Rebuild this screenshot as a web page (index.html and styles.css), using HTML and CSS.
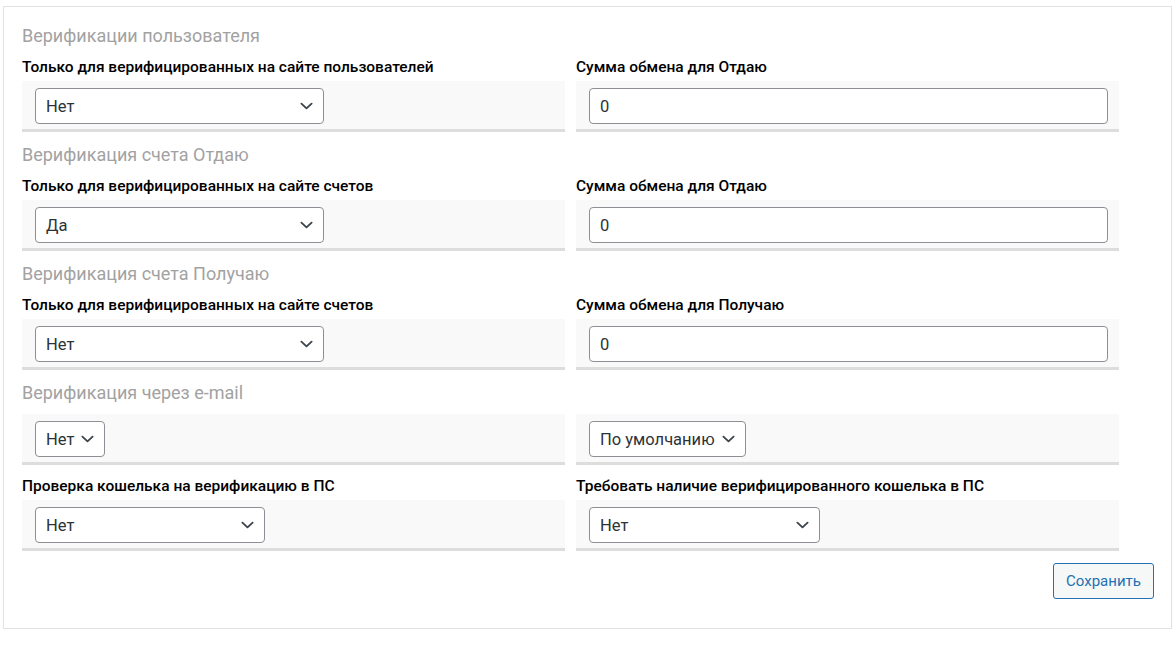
FILE: index.html
```html
<!DOCTYPE html>
<html lang="ru">
<head>
<meta charset="utf-8">
<title>Верификация</title>
<link rel="stylesheet" href="styles.css">
</head>
<body>
<div class="card">
  <section class="section">
    <h3 class="section-title">Верификации пользователя</h3>
    <div class="grid">
      <div class="field">
        <div class="label">Только для верифицированных на сайте пользователей</div>
        <div class="row">
          <div class="select w-289"><span>Нет</span><svg class="chev" viewBox="0 0 14 8"><path d="M1.5 1.5 7 6.5 12.5 1.5"/></svg></div>
        </div>
      </div>
      <div class="field">
        <div class="label">Сумма обмена для Отдаю</div>
        <div class="row"><div class="input">0</div></div>
      </div>
    </div>
  </section>

  <section class="section">
    <h3 class="section-title">Верификация счета Отдаю</h3>
    <div class="grid">
      <div class="field">
        <div class="label">Только для верифицированных на сайте счетов</div>
        <div class="row">
          <div class="select w-289"><span>Да</span><svg class="chev" viewBox="0 0 14 8"><path d="M1.5 1.5 7 6.5 12.5 1.5"/></svg></div>
        </div>
      </div>
      <div class="field">
        <div class="label">Сумма обмена для Отдаю</div>
        <div class="row"><div class="input">0</div></div>
      </div>
    </div>
  </section>

  <section class="section">
    <h3 class="section-title">Верификация счета Получаю</h3>
    <div class="grid">
      <div class="field">
        <div class="label">Только для верифицированных на сайте счетов</div>
        <div class="row">
          <div class="select w-289"><span>Нет</span><svg class="chev" viewBox="0 0 14 8"><path d="M1.5 1.5 7 6.5 12.5 1.5"/></svg></div>
        </div>
      </div>
      <div class="field">
        <div class="label">Сумма обмена для Получаю</div>
        <div class="row"><div class="input">0</div></div>
      </div>
    </div>
  </section>

  <section class="section">
    <h3 class="section-title">Верификация через e-mail</h3>
    <div class="grid">
      <div class="field">
        <div class="row">
          <div class="select compact"><span>Нет</span><svg class="chev" viewBox="0 0 14 8"><path d="M1.5 1.5 7 6.5 12.5 1.5"/></svg></div>
        </div>
      </div>
      <div class="field">
        <div class="row">
          <div class="select compact"><span>По умолчанию</span><svg class="chev" viewBox="0 0 14 8"><path d="M1.5 1.5 7 6.5 12.5 1.5"/></svg></div>
        </div>
      </div>
    </div>
  </section>

  <section class="section">
    <div class="grid">
      <div class="field">
        <div class="label">Проверка кошелька на верификацию в ПС</div>
        <div class="row">
          <div class="select w-230"><span>Нет</span><svg class="chev" viewBox="0 0 14 8"><path d="M1.5 1.5 7 6.5 12.5 1.5"/></svg></div>
        </div>
      </div>
      <div class="field">
        <div class="label">Требовать наличие верифицированного кошелька в ПС</div>
        <div class="row">
          <div class="select w-231"><span>Нет</span><svg class="chev" viewBox="0 0 14 8"><path d="M1.5 1.5 7 6.5 12.5 1.5"/></svg></div>
        </div>
      </div>
    </div>
  </section>

  <div class="actions">
    <button class="btn" type="button">Сохранить</button>
  </div>
</div>
</body>
</html>
```

FILE: styles.css
```css
* { box-sizing: border-box; }

html, body {
  margin: 0;
  background: #ffffff;
}

body {
  padding: 6px 4px 0 3px;
  font-family: Roboto, "Liberation Sans", Arial, sans-serif;
  color: #1d2327;
}

.card {
  width: 1169px;
  border: 1px solid #e2e2e2;
  box-shadow: 0 1px 1px rgba(0, 0, 0, 0.06);
  background: #fff;
  padding: 17px 17px 29px 18px;
}

.section {
  margin: 0 0 11px 0;
}

.section-title {
  margin: 0 0 9px 0;
  font-size: 18px;
  line-height: 24px;
  font-weight: 400;
  color: #a2a2a2;
}

.grid {
  display: grid;
  grid-template-columns: 543px 543px;
  column-gap: 11px;
}

.label {
  font-size: 15.5px;
  line-height: 20px;
  font-weight: 500;
  color: #000;
  margin-bottom: 4px;
}

.row {
  background: #f9f9f9;
  border-bottom: 3px solid #dddddd;
  padding: 7px 11px 5px 13px;
  display: flex;
  align-items: center;
}

.select,
.input {
  height: 36px;
  border: 1px solid #8c8f94;
  border-radius: 4px;
  background: #fff;
  font-size: 16.5px;
  color: #2c3338;
  display: flex;
  align-items: center;
  padding: 0 10px;
}

.select {
  justify-content: space-between;
}

.select.compact {
  justify-content: flex-start;
  gap: 7px;
  padding-right: 10px;
}

.w-289 { width: 289px; }
.w-230 { width: 230px; }
.w-231 { width: 231px; }

.input {
  width: 519px;
}

.chev {
  width: 13px;
  height: 8px;
  flex: none;
  fill: none;
  stroke: #3c434a;
  stroke-width: 2;
  stroke-linecap: round;
  stroke-linejoin: round;
}

.actions {
  display: flex;
  justify-content: flex-end;
  padding-top: 1px;
}

.btn {
  height: 36px;
  width: 101px;
  border: 1px solid #2271b1;
  border-radius: 3px;
  background: #f6f7f7;
  color: #2271b1;
  font-family: Roboto, "Liberation Sans", Arial, sans-serif;
  font-size: 15px;
  padding: 0;
}
```
